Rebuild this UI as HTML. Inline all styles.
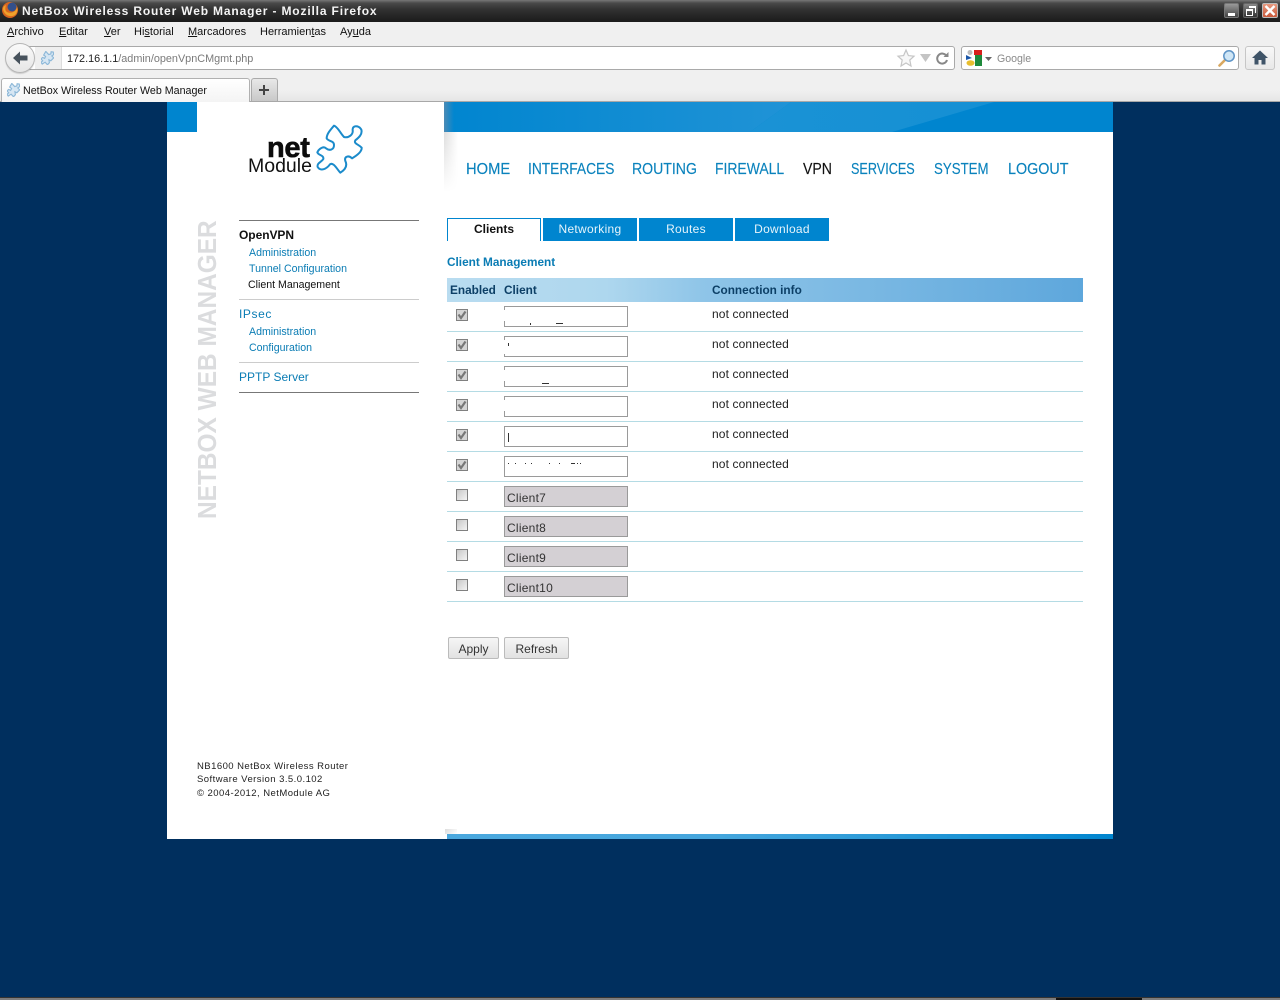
<!DOCTYPE html>
<html><head><meta charset="utf-8"><title>NetBox Wireless Router Web Manager</title>
<style>
*{box-sizing:border-box}
html,body{margin:0;padding:0;width:1280px;height:1000px;overflow:hidden;background:#002f5e;font-family:"Liberation Sans",sans-serif}
.a{position:absolute}
.t{position:absolute;white-space:nowrap;line-height:14px;height:14px}
.menu{font-size:11px;color:#111;top:25px}
.menu u{text-decoration:underline}
.nav{font-size:16px;line-height:20px;height:20px;top:159px;color:#0a82bd;transform-origin:0 50%;-webkit-text-stroke:.15px}
.tab{position:absolute;top:218px;width:94px;height:23px;background:#0085cf;color:#e6f4fb;font-size:12px;line-height:22px;text-align:center;letter-spacing:.3px}
.side{font-size:10.6px;color:#0a7cb4;left:249px}
.sec{font-size:12px;color:#0a7cb4;left:239px;letter-spacing:.6px}
.foot{font-size:9.5px;color:#222;left:197px;letter-spacing:.45px}
.hr{position:absolute;left:239px;width:180px;height:1px;background:#ccc}
.row{position:absolute;left:447px;width:636px;height:1px;background:#b4dbe4}
.cb{position:absolute;left:456px;width:12px;height:12px;border:1px solid #808080;background:linear-gradient(135deg,#c8c8c8,#f4f4f4)}
.cb svg{position:absolute;left:0;top:0}
.on{background:#d4d4d4}
.in{position:absolute;left:504px;width:124px;height:21px;border:1px solid #9a9a9a;background:#fff}
.dis{background:#d4d0d4;font-size:12px;line-height:22px;padding-left:2px;color:#333;letter-spacing:.25px}
.nc{left:712px;font-size:12px;color:#222;letter-spacing:.12px}
.m{position:absolute;background:#333}
.w{position:absolute;background:#fff}
.h{top:283px;font-size:11.8px;font-weight:bold;color:#0c3f66}
.btn{position:absolute;top:637px;height:22px;border:1px solid #bbb;border-radius:2px;background:linear-gradient(#f6f6f6,#e2e2e2);font-size:12px;line-height:23px;text-align:center;color:#333}
</style></head><body>

<!-- title bar -->
<div class="a" style="left:0;top:0;width:1280px;height:22px;background:linear-gradient(#777 0,#4a4a4a 3px,#333 9px,#1c1c1c 21px)"></div>
<svg class="a" style="left:1px;top:1px" width="18" height="18" viewBox="0 0 18 18"><circle cx="9" cy="9" r="8" fill="#d9661f"/><circle cx="11" cy="6" r="4.5" fill="#33508c"/><path d="M2 8C3 14 9 17 14 14 16 12 17 9 16 6 15 11 10 13 6 11 4 10 4 7 5 4 3 5 2 6 2 8Z" fill="#f0a22b"/></svg>
<div class="t" style="left:22px;top:4px;font-size:12px;font-weight:bold;color:#f4f4f4;letter-spacing:.84px">NetBox Wireless Router Web Manager - Mozilla Firefox</div>
<div class="a" style="left:1224px;top:3px;width:15px;height:15px;background:linear-gradient(#999,#444);border:1px solid #777;border-radius:2px"><div class="a" style="left:3px;top:9px;width:7px;height:3px;background:#fff"></div></div>
<div class="a" style="left:1243px;top:3px;width:15px;height:15px;background:linear-gradient(#888,#333);border:1px solid #666;border-radius:2px"><div class="a" style="left:2px;top:5px;width:7px;height:7px;border:1px solid #fff;border-top-width:2px"></div><div class="a" style="left:5px;top:2px;width:7px;height:7px;border:1px solid #fff;border-top-width:2px;border-left:none;border-bottom:none"></div></div>
<div class="a" style="left:1262px;top:3px;width:16px;height:15px;background:linear-gradient(#e89a80,#c9583a);border:1px solid #bbb;border-radius:2px"><svg class="a" style="left:1px;top:1px" width="12" height="11"><path d="M1.5 1 10.5 10M10.5 1 1.5 10" stroke="#fff" stroke-width="2.4"/></svg></div>

<!-- chrome -->
<div class="a" style="left:0;top:22px;width:1280px;height:79px;background:#f0f0f0"></div>
<div class="a" style="left:0;top:90px;width:1280px;height:11px;background:linear-gradient(#f0f0f0,#e6e6e6)"></div>
<div class="a" style="left:0;top:101px;width:1280px;height:1px;background:#a8a8a8"></div>
<div class="t menu" style="left:7px"><u>A</u>rchivo</div>
<div class="t menu" style="left:59px"><u>E</u>ditar</div>
<div class="t menu" style="left:104px"><u>V</u>er</div>
<div class="t menu" style="left:134px">Hi<u>s</u>torial</div>
<div class="t menu" style="left:188px"><u>M</u>arcadores</div>
<div class="t menu" style="left:260px">Herramien<u>t</u>as</div>
<div class="t menu" style="left:340px">Ay<u>u</u>da</div>

<!-- url bar -->
<div class="a" style="left:24px;top:46px;width:931px;height:24px;background:#fff;border:1px solid #a9a9a9;border-radius:3px"></div>
<div class="a" style="left:35px;top:47px;width:27px;height:22px;background:#efefef;border-right:1px solid #ddd"></div>
<div class="a" style="left:5px;top:43px;width:30px;height:30px;border-radius:50%;background:linear-gradient(#fafafa,#e6e6e6);border:1px solid #b5b5b5;box-shadow:0 1px 1px rgba(0,0,0,.15)"></div>
<svg class="a" style="left:11px;top:50px" width="18" height="16" viewBox="0 0 18 16"><path d="M9 1.5 2 8l7 6.5V10.5h7.5v-5H9Z" fill="#47525c"/></svg>
<svg class="a" style="left:41px;top:51px" width="13" height="14" viewBox="472 88 136 146"><path d="M522 92 500 130 520 145 510 165 490 155 472 170 490 190 472 205 485 225 515 205 540 232 560 210 555 180 575 190 605 160 585 140 605 125 600 98 578 96 575 118 552 125Z" fill="#d6e6f3" stroke="#8db8d8" stroke-width="12"/></svg>
<div class="t" style="left:67px;top:52px;font-size:10.85px;color:#222">172.16.1.1<span style="color:#7a7a7a">/admin/openVpnCMgmt.php</span></div>
<svg class="a" style="left:896px;top:48px" width="20" height="20" viewBox="0 0 20 20"><path d="M10 2 12.4 7.6 18 8.2 13.8 12 15 18 10 15 5 18 6.2 12 2 8.2 7.6 7.6Z" fill="#f8f8f8" stroke="#c6c6c6" stroke-width="1.2"/></svg>
<svg class="a" style="left:920px;top:54px" width="11" height="9"><path d="M0 0H11L5.5 8Z" fill="#c4c4c4"/></svg>
<svg class="a" style="left:936px;top:52px" width="13" height="13" viewBox="0 0 13 13"><path d="M10.5 4A5 5 0 1 0 11 8" fill="none" stroke="#888" stroke-width="2"/><path d="M7.5 5H12.5V0Z" fill="#888"/></svg>

<!-- search -->
<div class="a" style="left:961px;top:46px;width:278px;height:24px;background:#fff;border:1px solid #a9a9a9;border-radius:3px"></div>
<svg class="a" style="left:966px;top:50px" width="16" height="16" viewBox="0 0 16 16"><rect x="8" y="0" width="8" height="5" fill="#d8201c"/><rect x="9" y="5" width="7" height="11" fill="#1e8a3c"/><circle cx="4" cy="2.5" r="2.5" fill="#7a7a7a" opacity=".5"/><path d="M0 5 6 8 0 10Z" fill="#1a56a8"/><ellipse cx="4.5" cy="13" rx="4" ry="2.8" fill="#e8be2e"/></svg>
<svg class="a" style="left:985px;top:57px" width="7" height="4"><path d="M0 0H7L3.5 4Z" fill="#666"/></svg>
<div class="t" style="left:997px;top:52px;font-size:10.6px;color:#8a8a8a">Google</div>
<svg class="a" style="left:1218px;top:49px" width="18" height="18" viewBox="0 0 18 18"><path d="M7 11 1.5 16.5" stroke="#d9a860" stroke-width="2.6" stroke-linecap="round"/><circle cx="11" cy="7" r="5.2" fill="#cfe6f6" stroke="#5e94c6" stroke-width="1.5"/></svg>
<div class="a" style="left:1245px;top:46px;width:30px;height:24px;background:linear-gradient(#f8f8f8,#e8e8e8);border:1px solid #c6c6c6;border-radius:3px"></div>
<svg class="a" style="left:1252px;top:50px" width="16" height="15" viewBox="0 0 16 15"><path d="M8 .5 0 8H2.5V14.5H6.5V10H9.5V14.5H13.5V8H16Z" fill="#3f5468"/></svg>

<!-- tabs -->
<div class="a" style="left:1px;top:78px;width:249px;height:24px;background:linear-gradient(#fff,#f4f4f4);border:1px solid #b0b0b0;border-bottom:none;border-radius:3px 3px 0 0"></div>
<svg class="a" style="left:7px;top:83px" width="13" height="14" viewBox="472 88 136 146"><path d="M522 92 500 130 520 145 510 165 490 155 472 170 490 190 472 205 485 225 515 205 540 232 560 210 555 180 575 190 605 160 585 140 605 125 600 98 578 96 575 118 552 125Z" fill="#d6e6f3" stroke="#8db8d8" stroke-width="12"/></svg>
<div class="t" style="left:23px;top:84px;font-size:10.7px;color:#111">NetBox Wireless Router Web Manager</div>
<div class="a" style="left:251px;top:78px;width:27px;height:23px;background:linear-gradient(#e8e8e8,#c8c8c8);border:1px solid #aaa;border-bottom:none;border-radius:3px 3px 0 0"></div>
<svg class="a" style="left:258px;top:84px" width="12" height="12"><path d="M6 1V11M1 6H11" stroke="#444" stroke-width="2"/></svg>

<!-- page -->
<div class="a" style="left:167px;top:102px;width:946px;height:737px;background:#fff"></div>
<svg class="a" style="left:167px;top:102px" width="946" height="30">
 <defs><linearGradient id="g1" x1="0" x2="1" y1="0" y2="0"><stop offset="0" stop-color="#0085cf"/><stop offset="1" stop-color="#2093d6"/></linearGradient>
 <linearGradient id="g2" x1="0" x2="1" y1="0" y2="0"><stop offset="0" stop-color="#1a92d5"/><stop offset="1" stop-color="#1590d4"/></linearGradient></defs>
 <rect width="946" height="30" fill="#0085cf"/>
 <path d="M273 0H624L583 30H273Z" fill="url(#g1)"/>
 <path d="M624 0H827L725 30H583Z" fill="url(#g2)"/>
</svg>
<div class="a" style="left:444px;top:102px;width:10px;height:30px;background:linear-gradient(90deg,#4c8bb5,rgba(0,133,207,0))"></div>
<div class="a" style="left:197px;top:102px;width:247px;height:120px;background:#fff"></div>
<div class="a" style="left:444px;top:132px;width:14px;height:60px;background:linear-gradient(90deg,#ddd,#fff);-webkit-mask-image:linear-gradient(#000,transparent)"></div>

<!-- logo -->
<div class="t" style="left:267px;top:134px;font-size:29px;line-height:29px;height:29px;font-weight:bold;color:#0c0c0c;letter-spacing:-.3px;-webkit-text-stroke:.6px #0c0c0c">net</div>
<div class="t" style="left:248px;top:156px;font-size:19.5px;line-height:20px;height:20px;color:#111">Module</div>
<svg class="a" style="left:160px;top:95px" width="300" height="130" viewBox="0 0 900 390"><path d="M522 92C512 104 500 116 500 130 505 140 522 136 522 150 522 165 508 168 498 160 490 152 476 162 472 172 476 182 492 180 490 192 484 202 470 204 473 216 482 230 500 222 510 208 520 200 532 224 541 233 552 226 564 214 556 198 552 184 566 180 576 190 590 182 606 170 605 158 596 148 580 146 586 136 596 128 608 118 604 104 596 90 576 90 578 106 580 118 566 130 552 126 540 114 534 96 522 92Z" fill="#fff" stroke="#1b8bcb" stroke-width="6" stroke-linejoin="round"/></svg>

<!-- nav -->
<div class="t nav" style="left:466px;top:160px;transform:scaleX(.92)">HOME</div>
<div class="t nav" style="left:528px;top:160px;transform:scaleX(.86)">INTERFACES</div>
<div class="t nav" style="left:632px;top:160px;transform:scaleX(.88)">ROUTING</div>
<div class="t nav" style="left:715px;top:160px;transform:scaleX(.87)">FIREWALL</div>
<div class="t nav" style="left:803px;top:160px;color:#111;transform:scaleX(.88)">VPN</div>
<div class="t nav" style="left:851px;top:160px;transform:scaleX(.79)">SERVICES</div>
<div class="t nav" style="left:934px;top:160px;transform:scaleX(.83)">SYSTEM</div>
<div class="t nav" style="left:1008px;top:160px;transform:scaleX(.895)">LOGOUT</div>

<!-- vertical label -->
<div class="t" style="left:195px;top:519px;height:24px;line-height:24px;font-size:26px;font-weight:bold;color:#dbdcde;transform-origin:0 0;transform:rotate(-90deg) scaleX(.94)">NETBOX WEB MANAGER</div>

<!-- side menu -->
<div class="hr" style="top:220px;background:#777"></div>
<div class="t" style="left:239px;top:228px;font-size:12px;font-weight:bold;color:#111;letter-spacing:-.05px">OpenVPN</div>
<div class="t side" style="top:246px">Administration</div>
<div class="t side" style="top:262px">Tunnel Configuration</div>
<div class="t side" style="top:278px;color:#111;left:248px">Client Management</div>
<div class="hr" style="top:299px"></div>
<div class="t sec" style="top:307px">IPsec</div>
<div class="t side" style="top:325px">Administration</div>
<div class="t side" style="top:341px">Configuration</div>
<div class="hr" style="top:362px"></div>
<div class="t sec" style="top:370px;letter-spacing:0">PPTP Server</div>
<div class="hr" style="top:392px;background:#777"></div>

<!-- footer -->
<div class="t foot" style="top:760px">NB1600 NetBox Wireless Router</div>
<div class="t foot" style="top:773px">Software Version 3.5.0.102</div>
<div class="t foot" style="top:787px">© 2004-2012, NetModule AG</div>

<!-- bottom band -->
<div class="a" style="left:447px;top:834px;width:666px;height:5px;background:linear-gradient(90deg,#4ba8de,#45a6dd 40%,#2c9bd8 65%,#0085cf)"></div>
<div class="a" style="left:445px;top:829px;width:12px;height:5px;background:linear-gradient(135deg,#ddd,#fff)"></div>

<!-- tabs content -->
<div class="tab" style="left:447px;background:#fff;color:#111;font-weight:bold;border:1px solid #0085cf;border-bottom:none;line-height:20px;letter-spacing:0">Clients</div>
<div class="tab" style="left:543px">Networking</div>
<div class="tab" style="left:639px">Routes</div>
<div class="tab" style="left:735px">Download</div>

<div class="t" style="left:447px;top:255px;font-size:11.8px;font-weight:bold;color:#0a7cb4">Client Management</div>

<div class="a" style="left:447px;top:278px;width:636px;height:24px;background:linear-gradient(90deg,#b9dcf0 0,#aed7ee 25%,#8fc5e8 40%,#5ea7dc 100%)"></div>
<div class="t h" style="left:450px">Enabled</div>
<div class="t h" style="left:504px">Client</div>
<div class="t h" style="left:712px">Connection info</div>

<!-- rows -->
<div class="row" style="top:331px"></div><div class="row" style="top:361px"></div><div class="row" style="top:391px"></div><div class="row" style="top:421px"></div><div class="row" style="top:451px"></div><div class="row" style="top:481px"></div><div class="row" style="top:511px"></div><div class="row" style="top:541px"></div><div class="row" style="top:571px"></div><div class="row" style="top:601px"></div>

<div class="cb on" style="top:309px"><svg width="10" height="10"><path d="M1.5 4.5 4 8 8.5 1.5" fill="none" stroke="#777" stroke-width="2.2"/></svg></div>
<div class="cb on" style="top:339px"><svg width="10" height="10"><path d="M1.5 4.5 4 8 8.5 1.5" fill="none" stroke="#777" stroke-width="2.2"/></svg></div>
<div class="cb on" style="top:369px"><svg width="10" height="10"><path d="M1.5 4.5 4 8 8.5 1.5" fill="none" stroke="#777" stroke-width="2.2"/></svg></div>
<div class="cb on" style="top:399px"><svg width="10" height="10"><path d="M1.5 4.5 4 8 8.5 1.5" fill="none" stroke="#777" stroke-width="2.2"/></svg></div>
<div class="cb on" style="top:429px"><svg width="10" height="10"><path d="M1.5 4.5 4 8 8.5 1.5" fill="none" stroke="#777" stroke-width="2.2"/></svg></div>
<div class="cb on" style="top:459px"><svg width="10" height="10"><path d="M1.5 4.5 4 8 8.5 1.5" fill="none" stroke="#777" stroke-width="2.2"/></svg></div>
<div class="cb" style="top:489px"></div><div class="cb" style="top:519px"></div><div class="cb" style="top:549px"></div><div class="cb" style="top:579px"></div>

<div class="in" style="top:306px"></div><div class="w" style="left:504px;top:310px;width:2px;height:11px"></div><div class="m" style="left:530px;top:323px;width:1px;height:2px"></div><div class="m" style="left:556px;top:323px;width:7px;height:1px"></div>
<div class="in" style="top:336px"></div><div class="w" style="left:504px;top:340px;width:2px;height:14px"></div><div class="m" style="left:508px;top:343px;width:1px;height:3px"></div>
<div class="in" style="top:366px"></div><div class="w" style="left:504px;top:370px;width:2px;height:11px"></div><div class="m" style="left:542px;top:383px;width:7px;height:1px"></div>
<div class="in" style="top:396px"></div><div class="w" style="left:504px;top:400px;width:2px;height:11px"></div>
<div class="in" style="top:426px"></div><div class="m" style="left:508px;top:433px;width:1px;height:9px"></div>
<div class="in" style="top:456px"></div>
<div class="m" style="left:508px;top:463px;width:1px;height:1px"></div><div class="m" style="left:515px;top:463px;width:1px;height:1px"></div><div class="m" style="left:525px;top:463px;width:1px;height:1px"></div><div class="m" style="left:531px;top:463px;width:1px;height:1px"></div><div class="m" style="left:549px;top:463px;width:1px;height:1px"></div><div class="m" style="left:559px;top:463px;width:1px;height:1px"></div><div class="m" style="left:571px;top:463px;width:4px;height:1px"></div><div class="m" style="left:577px;top:463px;width:1px;height:1px"></div><div class="m" style="left:580px;top:463px;width:1px;height:1px"></div>
<div class="in dis" style="top:486px">Client7</div>
<div class="in dis" style="top:516px">Client8</div>
<div class="in dis" style="top:546px">Client9</div>
<div class="in dis" style="top:576px">Client10</div>

<div class="t nc" style="top:307px">not connected</div>
<div class="t nc" style="top:337px">not connected</div>
<div class="t nc" style="top:367px">not connected</div>
<div class="t nc" style="top:397px">not connected</div>
<div class="t nc" style="top:427px">not connected</div>
<div class="t nc" style="top:457px">not connected</div>

<div class="btn" style="left:448px;width:51px">Apply</div>
<div class="btn" style="left:504px;width:65px">Refresh</div>

<!-- taskbar sliver -->
<div class="a" style="left:0;top:997px;width:1280px;height:3px;background:#7d7d7d;border-top:1px solid #333"></div>
<div class="a" style="left:1056px;top:998px;width:86px;height:2px;background:#111"></div>
</body></html>
